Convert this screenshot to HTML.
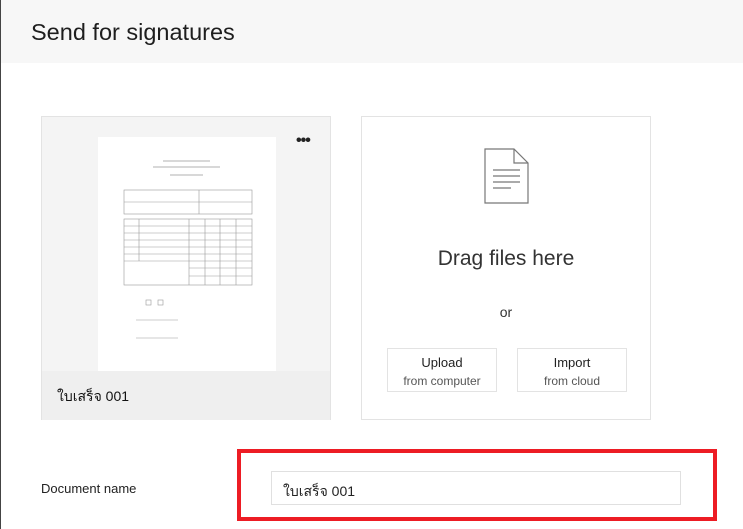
<!DOCTYPE html>
<html><head><meta charset="utf-8"><style>
*{margin:0;padding:0;box-sizing:border-box}
body{width:743px;height:529px;overflow:hidden;background:#fff;font-family:"Liberation Sans","Noto Sans CJK SC",sans-serif;color:#222;position:relative}
.lb{position:absolute;left:0;top:0;width:1px;height:529px;background:#444}
.hdr{position:absolute;left:1px;top:0;width:742px;height:63px;background:#f7f7f7}
.hdr h1{position:absolute;left:30px;top:19px;font-weight:normal;font-size:23.5px;color:#1e1e1e;letter-spacing:0px}
.card{position:absolute;top:116px;width:290px;height:304px;border:1px solid #e3e3e3}
#c1{left:41px;background:#f4f4f4}
#c2{left:361px;background:#fff}
.page{position:absolute;left:56px;top:20px;width:178px;height:234px;background:#fff}
.cap{position:absolute;left:0;top:254px;width:288px;height:49px;background:#efefef;font-size:14px;padding:15px 0 0 15px;color:#111}
.dots{position:absolute;left:254px;top:19px;font-size:16px;letter-spacing:-1px;font-weight:bold;color:#222;line-height:10px}
.drag{position:absolute;top:130px;width:100%;text-align:center;font-size:21px;color:#333}
.or{position:absolute;top:187px;width:100%;text-align:center;font-size:14px;color:#333}
.btn{position:absolute;top:231px;width:110px;height:44px;border:1px solid #e3e3e3;text-align:center;font-size:13px;color:#222;padding-top:6px;line-height:16px}
.btn small{display:block;font-size:12px;color:#555;margin-top:2px}
.lbl{position:absolute;left:41px;top:481px;font-size:13px;color:#222}
.red{position:absolute;left:237px;top:449px;width:480px;height:72px;border:4px solid #ed1c24}
.inp{position:absolute;left:271px;top:471px;width:410px;height:34px;border:1px solid #e0e0e0;font-size:14px;padding:9px 0 0 11px;color:#222}
</style></head><body>
<div class="lb"></div>
<div class="hdr"><h1>Send for signatures</h1></div>
<div class="card" id="c1">
 <div class="page">
  <svg width="178" height="234" viewBox="0 0 178 234" fill="none" stroke="#999" stroke-width="0.6">
   <g stroke="#666"><line x1="65" y1="24" x2="112" y2="24"/><line x1="55" y1="30" x2="122" y2="30"/><line x1="72" y1="38" x2="105" y2="38"/></g>
   <rect x="26" y="53" width="128" height="24"/><line x1="26" y1="65" x2="154" y2="65"/><line x1="101" y1="53" x2="101" y2="77"/>
   <rect x="26" y="82" width="128" height="66"/>
   <line x1="26" y1="89" x2="154" y2="89"/><line x1="26" y1="96" x2="154" y2="96"/><line x1="26" y1="103" x2="154" y2="103"/><line x1="26" y1="110" x2="154" y2="110"/><line x1="26" y1="117" x2="154" y2="117"/><line x1="26" y1="124" x2="154" y2="124"/>
   <line x1="41" y1="82" x2="41" y2="124"/><line x1="91" y1="82" x2="91" y2="148"/><line x1="107" y1="82" x2="107" y2="148"/><line x1="122" y1="82" x2="122" y2="148"/><line x1="138" y1="82" x2="138" y2="148"/>
   <line x1="91" y1="131" x2="154" y2="131"/><line x1="91" y1="139" x2="154" y2="139"/>
   <rect x="48" y="163" width="5" height="5"/><rect x="60" y="163" width="5" height="5"/>
   <line x1="38" y1="183" x2="80" y2="183"/><line x1="38" y1="201" x2="80" y2="201"/>
  </svg>
 </div>
 <div class="dots">•••</div>
 <div class="cap">ใบเสร็จ 001</div>
</div>
<div class="card" id="c2">
 <svg style="position:absolute;left:122px;top:31px" width="46" height="56" viewBox="0 0 46 56" fill="none" stroke="#777" stroke-width="1.2">
  <path d="M1 1 H30 L44 15 V55 H1 Z"/><path d="M30 1 V15 H44"/>
  <line x1="9" y1="22" x2="36" y2="22"/><line x1="9" y1="28" x2="36" y2="28"/><line x1="9" y1="34" x2="36" y2="34"/><line x1="9" y1="40" x2="27" y2="40"/>
 </svg>
 <div class="drag">Drag files here</div>
 <div class="or">or</div>
 <div class="btn" style="left:25px">Upload<small>from computer</small></div>
 <div class="btn" style="left:155px">Import<small>from cloud</small></div>
</div>
<div class="lbl">Document name</div>
<div class="red"></div>
<div class="inp">ใบเสร็จ 001</div>
</body></html>
